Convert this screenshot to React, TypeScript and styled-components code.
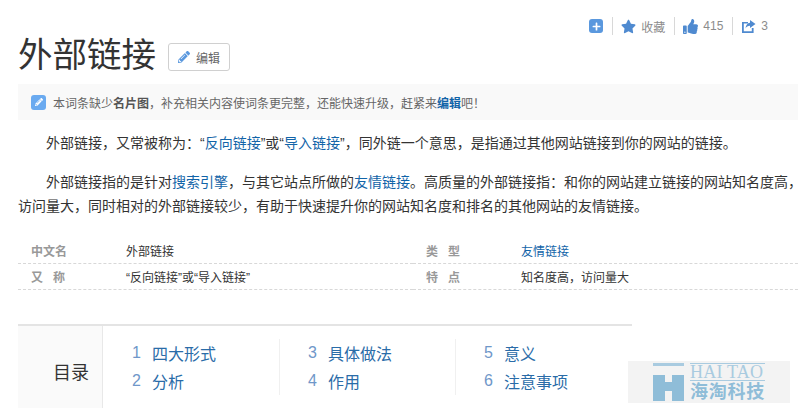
import React from "react";
import styled, { createGlobalStyle } from "styled-components";
import { FaPencilAlt, FaPlus, FaStar, FaThumbsUp } from "react-icons/fa";

const GlobalStyle = createGlobalStyle`
  html, body {
    margin: 0;
    padding: 0;
    background: #fff;
    overflow: hidden;
  }
  body {
    font-family: "Liberation Sans", "Noto Sans CJK SC", sans-serif;
  }
`;

const Page = styled.div`
  position: relative;
  width: 798px;
  height: 408px;
  overflow: hidden;
  padding-left: 18px;
  box-sizing: border-box;
`;

const Toolbar = styled.div`
  display: flex;
  justify-content: flex-end;
  align-items: center;
  height: 14px;
  padding: 19px 30px 0 0;
  font-size: 12px;
  color: #8c8c8c;
`;

const PlusBox = styled.span`
  display: flex;
  align-items: center;
  justify-content: center;
  width: 14px;
  height: 14px;
  border-radius: 3px;
  background: #5a98de;
  color: #fff;
  font-size: 9px;
`;

const ToolItem = styled.span`
  display: flex;
  align-items: center;
  gap: 5px;
  height: 18px;
  padding-left: 8px;
  margin-left: 9px;
  border-left: 1px solid #d8d8d8;
  color: #8c8c8c;
  svg {
    color: #4f8ad0;
    font-size: 15px;
  }
`;

const TitleRow = styled.div`
  display: flex;
  align-items: center;
  gap: 12px;
  height: 44px;
`;

const Title = styled.h1`
  margin: 0;
  font-size: 34.5px;
  font-weight: 400;
  line-height: 44px;
  color: #333;
`;

const EditButton = styled.span`
  display: flex;
  align-items: center;
  justify-content: center;
  gap: 6px;
  box-sizing: border-box;
  width: 62px;
  height: 28px;
  margin-top: 4px;
  border: 1px solid #d0d0d0;
  border-radius: 3px;
  font-size: 12px;
  color: #666;
  svg {
    color: #5a98de;
    font-size: 12px;
  }
`;

const Notice = styled.div`
  display: flex;
  align-items: center;
  gap: 7px;
  height: 36px;
  margin-top: 7px;
  padding-left: 13px;
  background: #f9f9f9;
  font-size: 12px;
  color: #666;
  white-space: nowrap;
  b {
    color: #555;
  }
  a {
    color: #1264a8;
    font-weight: 700;
  }
`;

const NoticeIcon = styled.span`
  display: flex;
  align-items: center;
  justify-content: center;
  width: 15px;
  height: 15px;
  border-radius: 3px;
  background: #6aaaf0;
  color: #fff;
  font-size: 8px;
`;

const Para = styled.p`
  width: 784px;
  margin: 0;
  text-indent: 28px;
  font-size: 14px;
  line-height: 24px;
  color: #333;
  a {
    color: #1264a8;
  }
`;

const FirstPara = styled(Para)`
  padding-top: 11px;
  margin-bottom: 15px;
`;

const InfoGrid = styled.dl`
  display: grid;
  grid-template-columns: 395px 395px;
  margin: 20px 0 0;
`;

const InfoCell = styled.div`
  display: flex;
  align-items: center;
  height: 26px;
  box-sizing: border-box;
  border-bottom: 1px dashed #d8d8d8;
  font-size: 12px;
`;

const InfoLabel = styled.dt`
  width: 108px;
  padding-left: 13px;
  box-sizing: border-box;
  font-weight: 700;
  color: #999;
  white-space: pre;
`;

const InfoValue = styled.dd`
  margin: 0;
  color: #333;
  a {
    color: #1264a8;
  }
`;

const Toc = styled.div`
  display: flex;
  width: 614px;
  height: 90px;
  margin-top: 34px;
  border-top: 2px solid #e4e4e4;
`;

const TocTitle = styled.div`
  box-sizing: border-box;
  width: 85px;
  padding: 29px 0 0 35px;
  background: #fafafa;
  border-right: 1px solid #e8e8e8;
  font-size: 18px;
  line-height: 36px;
  color: #333;
`;

const TocColumn = styled.ul`
  box-sizing: border-box;
  width: 176px;
  height: 56px;
  margin: 13px 0 0;
  padding: 0 0 0 28px;
  list-style: none;
  border-right: 1px solid #f0f0f0;
  &:first-of-type {
    margin-left: 1px;
  }
  &:last-child {
    border-right: none;
  }
`;

const TocItem = styled.li`
  display: flex;
  height: 28px;
  align-items: center;
  font-size: 16px;
  color: #2a6ca8;
`;

const TocNumber = styled.span`
  width: 20px;
  color: #6f97c9;
`;

const Watermark = styled.div`
  position: absolute;
  left: 628px;
  top: 361px;
  display: flex;
  gap: 6px;
  box-sizing: border-box;
  width: 162px;
  height: 42px;
  padding: 2px 0 0 25px;
  background: #f3f3f3;
  color: #8fbdd8;
`;

const WatermarkText = styled.div`
  display: flex;
  flex-direction: column;
  width: 75px;
`;

const WatermarkLatin = styled.div`
  box-sizing: border-box;
  height: 18px;
  border-top: 1px solid #a9cbe0;
  border-bottom: 1px solid #a9cbe0;
  font-family: "Liberation Serif", serif;
  font-size: 18px;
  line-height: 16px;
  letter-spacing: 0.2px;
  color: #a9cbe0;
  white-space: nowrap;
`;

const WatermarkCjk = styled.div`
  margin-top: -1px;
  font-family: "Noto Sans CJK SC", sans-serif;
  font-size: 18px;
  font-weight: 700;
  line-height: 20px;
  white-space: nowrap;
  letter-spacing: 0.75px;
`;

const tocColumns = [
  [["1", "四大形式"], ["2", "分析"]],
  [["3", "具体做法"], ["4", "作用"]],
  [["5", "意义"], ["6", "注意事项"]],
];

const ShareIcon = () => (
  <svg width="15" height="15" viewBox="0 0 15 15" fill="currentColor">
    <path d="M1 3h6v1.6H2.8v7.6h8V9h1.8v5H1z" />
    <path d="M9 1l5.5 4L9 9V6.8C6.8 6.8 5.4 7.6 4.5 9.4 4.8 6.4 6.4 4.2 9 3.8z" />
  </svg>
);

export default function App() {
  return (
    <Page>
      <GlobalStyle />
      <Toolbar>
        <PlusBox><FaPlus /></PlusBox>
        <ToolItem><FaStar />收藏</ToolItem>
        <ToolItem><FaThumbsUp />415</ToolItem>
        <ToolItem><ShareIcon />3</ToolItem>
      </Toolbar>
      <TitleRow>
        <Title>外部链接</Title>
        <EditButton><FaPencilAlt />编辑</EditButton>
      </TitleRow>
      <Notice>
        <NoticeIcon><FaPencilAlt /></NoticeIcon>
        <span>本词条缺少<b>名片图</b>，补充相关内容使词条更完整，还能快速升级，赶紧来<a>编辑</a>吧！</span>
      </Notice>
      <FirstPara>外部链接，又常被称为：“<a>反向链接</a>”或“<a>导入链接</a>”，同外链一个意思，是指通过其他网站链接到你的网站的链接。</FirstPara>
      <Para>外部链接指的是针对<a>搜索引擎</a>，与其它站点所做的<a>友情链接</a>。高质量的外部链接指：和你的网站建立链接的网站知名度高，访问量大，同时相对的外部链接较少，有助于快速提升你的网站知名度和排名的其他网站的友情链接。</Para>
      <InfoGrid>
        <InfoCell><InfoLabel>中文名</InfoLabel><InfoValue>外部链接</InfoValue></InfoCell>
        <InfoCell><InfoLabel>类{"   "}型</InfoLabel><InfoValue><a>友情链接</a></InfoValue></InfoCell>
        <InfoCell><InfoLabel>又{"   "}称</InfoLabel><InfoValue>“反向链接”或“导入链接”</InfoValue></InfoCell>
        <InfoCell><InfoLabel>特{"   "}点</InfoLabel><InfoValue>知名度高，访问量大</InfoValue></InfoCell>
      </InfoGrid>
      <Toc>
        <TocTitle>目录</TocTitle>
        {tocColumns.map((col, i) => (
          <TocColumn key={i}>
            {col.map(([n, label]) => (
              <TocItem key={n}><TocNumber>{n}</TocNumber>{label}</TocItem>
            ))}
          </TocColumn>
        ))}
      </Toc>
      <Watermark>
        <svg width="31" height="38" viewBox="0 0 31 38">
          <rect x="0" y="0" width="31" height="3" fill="#a9cbe0" />
          <path d="M0 12h12v7h7v-7h12v26h-12v-10h-7v10h-12z" fill="#8fbdd8" />
        </svg>
        <WatermarkText>
          <WatermarkLatin>HAI TAO</WatermarkLatin>
          <WatermarkCjk>海淘科技</WatermarkCjk>
        </WatermarkText>
      </Watermark>
    </Page>
  );
}
